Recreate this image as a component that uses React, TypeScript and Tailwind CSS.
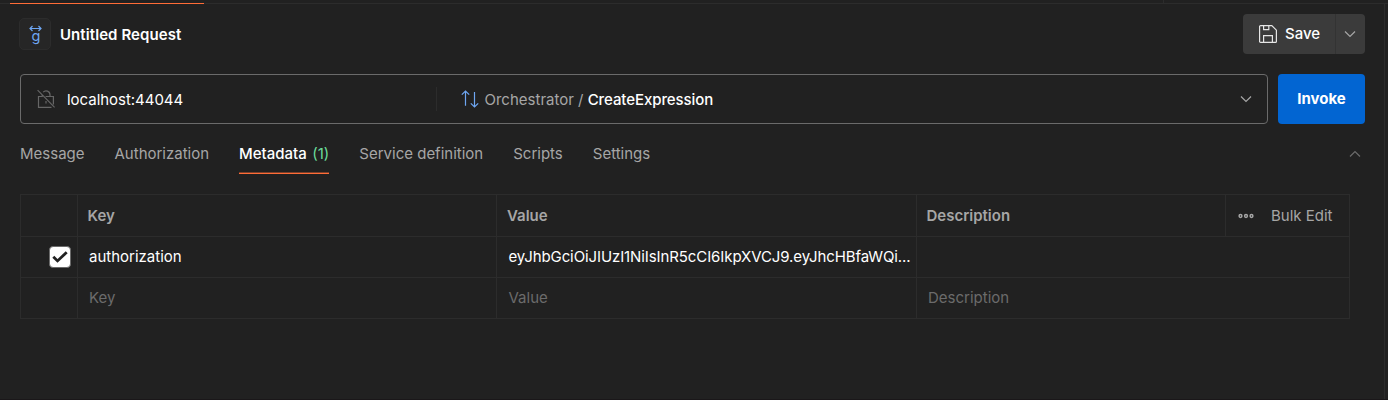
import type { ReactNode } from "react";

function Chevron({ up = false, className = "" }: { up?: boolean; className?: string }) {
  return (
    <svg width="12" height="8" viewBox="0 0 12 8" fill="none" stroke="currentColor" className={className}>
      <path d={up ? "M1 6.5 6 1.5l5 5" : "M1 1.5l5 5 5-5"} strokeWidth="1.2" />
    </svg>
  );
}

function UnlockedIcon() {
  return (
    <svg width="18" height="20" viewBox="0 0 18 20" fill="none" stroke="#666666" strokeWidth="1.2">
      <path d="M6.2 3.2A3.9 3.9 0 0 1 13 5.8v1.7M5.2 5.6v1.9H1.5v10.9h13M8.6 7.5h7.8v8M9 12v2.4M.6 1.2l17 17.2" />
    </svg>
  );
}

function SaveIcon() {
  return (
    <svg width="18" height="18" viewBox="0 0 18 18" fill="none" stroke="#e6e6e6" strokeWidth="1.2">
      <path d="M.6 1.6a1 1 0 0 1 1-1h11.2l4.6 4.6v11.2a1 1 0 0 1-1 1H1.6a1 1 0 0 1-1-1zM4.6 .6v4h5.2v-4M4.6 17.4v-6.8h8.8v6.8" />
    </svg>
  );
}

function MethodIcon() {
  return (
    <svg width="18" height="18" viewBox="0 0 18 18" fill="none" stroke="#6ea6f2" strokeWidth="1.2">
      <path d="M4.5 15.8V1M.8 4.7 4.5 1l3.7 3.7M13.5 2v15M9.8 13.3l3.7 3.7 3.7-3.7" />
    </svg>
  );
}

function Tab({ children }: { children: ReactNode }) {
  return <button className="flex h-10 items-center">{children}</button>;
}

export default function App() {
  return (
    <div className="flex h-[400px] w-[1388px] flex-col overflow-hidden bg-[#212121] font-['Inter',sans-serif] text-[15px] leading-5 text-[#a6a6a6]">
      <div className="flex h-1 shrink-0">
        <div className="w-[10px] border-b border-[#2c2c2c]" />
        <div className="w-[194px] border-b border-[#ff6c37]" />
        <div className="w-[960px] border-r border-b border-[#2c2c2c]" />
        <div className="flex-1 border-b border-[#2c2c2c]" />
      </div>
      <div className="flex min-h-0 flex-1">
        <main className="flex w-[1384px] flex-col">
          <header className="flex h-[60px] shrink-0 items-center pr-[19px] pl-[19px]">
            <div className="flex size-8 flex-col items-center rounded-[5px] border border-[#2c2c2c] bg-[#262626] pt-[6px] text-[#6ea6f2]">
              <svg width="13" height="7" viewBox="0 0 13 7" fill="none" stroke="currentColor" strokeWidth="1.2" className="shrink-0">
                <path d="M1 3.5h11M3.5 1 1 3.5 3.5 6M9.5 1 12 3.5 9.5 6" />
              </svg>
              <span className="-mt-1 ml-[2px] text-[14.5px] leading-[15px]">g</span>
            </div>
            <h1 className="ml-[9px] pt-[2px] text-[15px] font-semibold tracking-[0.08px] text-white">Untitled Request</h1>
            <div className="ml-auto flex h-10 overflow-hidden rounded-[4px] bg-[#3b3b3b] text-white">
              <button className="flex w-[93px] items-center border-r border-[#333333] pl-4 font-medium">
                <SaveIcon />
                <span className="ml-2">Save</span>
              </button>
              <button className="flex w-[29px] items-center pl-2 text-[#a6a6a6]">
                <Chevron />
              </button>
            </div>
          </header>

          <div className="mt-[10px] flex h-[50px] shrink-0 gap-[10px] pr-[19px] pl-5">
            <div className="flex w-[1248px] items-center rounded-[4px] border border-[#6b6b6b]">
              <div className="flex h-6 w-[416px] items-center border-r border-[#2c2c2c] pl-4 text-white">
                <UnlockedIcon />
                <span className="ml-3 pt-[2px] tracking-[-0.03px]">localhost:44044</span>
              </div>
              <div className="flex flex-1 items-center pl-6">
                <MethodIcon />
                <span className="ml-[5.5px] pt-[2px]">
                  Orchestrator / <span className="font-medium tracking-[-0.08px] text-white">CreateExpression</span>
                </span>
                <Chevron className="mr-[15px] ml-auto" />
              </div>
            </div>
            <button className="w-[87px] rounded-[4px] bg-[#0265d2] font-bold text-white">Invoke</button>
          </div>

          <nav className="mt-[10px] flex h-10 shrink-0 items-center gap-[30px] pr-[23px] pl-5">
            <Tab>Message</Tab>
            <Tab>Authorization</Tab>
            <button className="flex h-10 items-center gap-[5.5px] border-b border-[#ff6c37] pt-px font-medium text-white shadow-[inset_0_-1px_0_#7a3f2a]">
              Metadata <span className="font-normal text-[#6bdd9a]">(1)</span>
            </button>
            <Tab>Service definition</Tab>
            <Tab>Scripts</Tab>
            <Tab>Settings</Tab>
            <Chevron up className="ml-auto text-[#6b6b6b]" />
          </nav>

          <section className="mt-5 ml-5 grid w-[1330px] grid-cols-[57px_419px_420px_1fr] grid-rows-[42px_41px_41px] border-t border-l border-[#2c2c2c] *:flex *:items-center *:border-r *:border-b *:border-[#2c2c2c]">
            <div />
            <div className="pl-[9.5px] font-semibold">Key</div>
            <div className="pl-[10px] font-semibold">Value</div>
            <div>
              <span className="flex h-full w-[309px] items-center border-r border-[#2c2c2c] pl-[9.5px] font-semibold">Description</span>
              <svg width="16" height="6" viewBox="0 0 16 6" fill="none" stroke="#a6a6a6" strokeWidth="1.5" className="ml-[12px]">
                <circle cx="2.5" cy="3" r="1.4" />
                <circle cx="8" cy="3" r="1.4" />
                <circle cx="13.5" cy="3" r="1.4" />
              </svg>
              <span className="ml-[17px]">Bulk Edit</span>
            </div>

            <div className="justify-end pr-[6px]">
              <span className="flex size-[22px] items-center justify-center rounded-[4px] border border-[#6b6b6b] bg-white">
                <svg width="16" height="12" viewBox="0 0 16 12" fill="none" stroke="#212121" strokeWidth="2.8">
                  <path d="m1.3 5.8 4.2 4.1L14.7 1.3" />
                </svg>
              </span>
            </div>
            <div className="pl-[11px] text-white">authorization</div>
            <div className="pl-[11.5px] tracking-[-0.1px] whitespace-nowrap text-white">eyJhbGciOiJIUzI1NiIsInR5cCI6IkpXVCJ9.eyJhcHBfaWQi...</div>
            <div />

            <div />
            <div className="pl-[11px] text-[#6b6b6b]">Key</div>
            <div className="pl-[11.5px] text-[#6b6b6b]">Value</div>
            <div className="pl-[11px] text-[#6b6b6b]">Description</div>
          </section>
        </main>
        <aside className="flex-1 border-l border-[#2c2c2c]" />
      </div>
      <div className="h-px shrink-0 bg-[#1a1719]" />
    </div>
  );
}
